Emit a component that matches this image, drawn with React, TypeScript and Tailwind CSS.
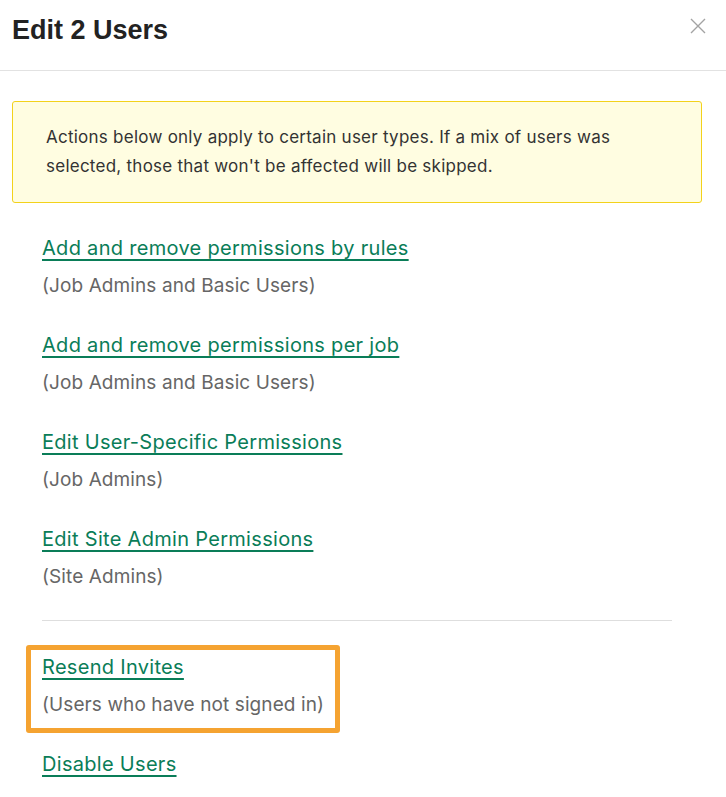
import React from "react";

const items = [
  { label: "Add and remove permissions by rules", sub: "(Job Admins and Basic Users)" },
  { label: "Add and remove permissions per job", sub: "(Job Admins and Basic Users)" },
  { label: "Edit User-Specific Permissions", sub: "(Job Admins)" },
  { label: "Edit Site Admin Permissions", sub: "(Site Admins)" },
];

function Item({ label, sub }: { label: string; sub?: string }) {
  return (
    <div className="flex flex-col">
      <a
        href="#"
        className="text-[20px] leading-[30px] tracking-[0.3px] text-[#0a7d58] underline underline-offset-[4px] decoration-[1.5px] w-fit"
      >
        {label}
      </a>
      {sub && <div className="mt-[8px] text-[19px] leading-[30px] tracking-[0.1px] text-[#666666]">{sub}</div>}
    </div>
  );
}

export default function App() {
  return (
    <div className="w-[726px] min-h-[797px] bg-white" style={{ fontFamily: "Inter, 'Liberation Sans', sans-serif" }}>
      <div className="h-[71px] border-b border-[#e2e2e2] flex items-start justify-between pl-[12px] pr-[20px]">
        <h1
          className="pt-[14px] text-[27px] leading-[32px] font-bold text-[#222222]"
          style={{ fontFamily: "'Liberation Sans', Arial, sans-serif" }}
        >
          Edit 2 Users
        </h1>
        <button className="mt-[18px] w-[16px] h-[16px]" aria-label="Close">
          <svg width="16" height="16" viewBox="0 0 16 16" fill="none" stroke="#a3a3a3" strokeWidth="1.4">
            <path d="M1 1L15 15M15 1L1 15" />
          </svg>
        </button>
      </div>

      <div className="mt-[30px] ml-[12px] mr-[24px] border border-[#f3d21b] bg-[#fffde1] rounded-[3px] pl-[33px] pr-[20px] py-[21px]">
        <p className="text-[17px] leading-[29px] tracking-[0.25px] text-[#333333] max-w-[600px]">
          Actions below only apply to certain user types. If a mix of users was selected, those that won't be affected will be skipped.
        </p>
      </div>

      <div className="mt-[30px] pl-[42px] pr-[54px]">
        <div className="flex flex-col gap-[29px]">
          {items.map((it) => (
            <Item key={it.label} label={it.label} sub={it.sub} />
          ))}
        </div>
        <div className="mt-[28px] border-t border-[#dedede]" />
        <div className="mt-[24px] -ml-[16px] w-[314px] border-[5px] border-[#f5a331] rounded-[3px] pl-[11px] pt-[2px] pb-[8px]">
          <Item label="Resend Invites" sub="(Users who have not signed in)" />
        </div>
        <div className="mt-[16px]">
          <Item label="Disable Users" />
        </div>
      </div>
    </div>
  );
}
